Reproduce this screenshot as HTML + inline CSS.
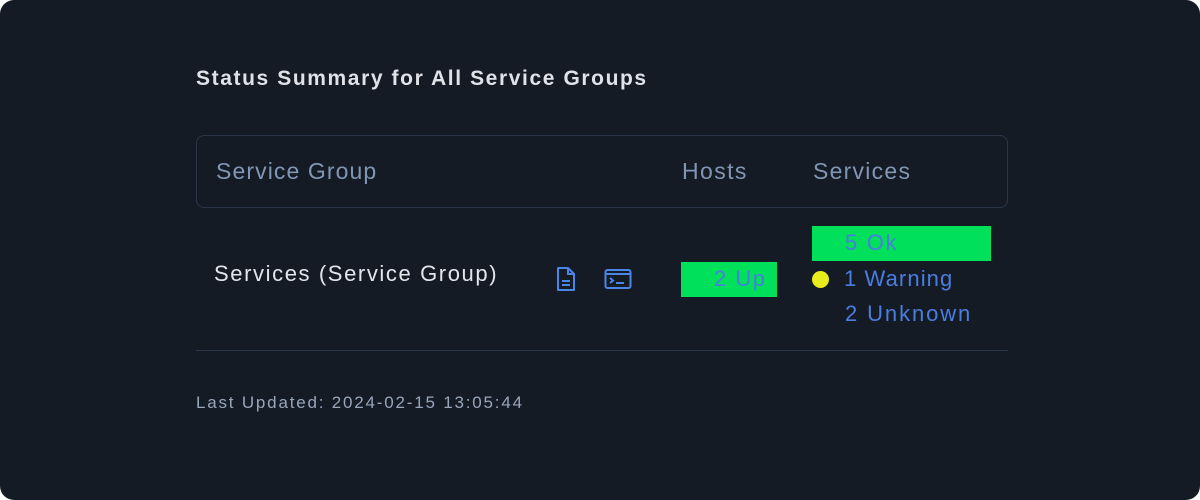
<!DOCTYPE html>
<html><head><meta charset="utf-8"><style>
html,body{margin:0;padding:0;background:#fff;}
body{width:1200px;height:500px;overflow:hidden;}
.card{position:absolute;left:0;top:0;width:1200px;height:500px;background:#151b25;border-radius:14px;font-family:"Liberation Sans",sans-serif;}
.t{position:absolute;white-space:nowrap;}
</style></head><body><div class="card">
<div class="t" style="left:196px;top:67px;font-size:21px;font-weight:bold;color:#dfe3e9;letter-spacing:1.6px;">Status Summary for All Service Groups</div>
<div style="position:absolute;left:196px;top:135px;width:810px;height:71px;border:1px solid #2a3647;border-radius:8px;"></div>
<div class="t" style="left:216px;top:158px;font-size:23px;color:#8196b3;letter-spacing:1.1px;">Service Group</div>
<div class="t" style="left:682px;top:158px;font-size:23px;color:#8196b3;letter-spacing:1.4px;">Hosts</div>
<div class="t" style="left:813px;top:158px;font-size:23px;color:#8196b3;letter-spacing:1.25px;">Services</div>
<div class="t" style="left:214px;top:261px;font-size:22px;color:#e2e6ec;letter-spacing:1.6px;">Services (Service Group)</div>
<svg style="position:absolute;left:555px;top:266px" width="22" height="26" viewBox="0 0 22 26"><path d="M3 2h10l6 6v16H3z" fill="none" stroke="#4a86e8" stroke-width="2" stroke-linejoin="round"/><path d="M13 2v6h6M7 15h8M7 19h8" fill="none" stroke="#4a86e8" stroke-width="2"/></svg>
<svg style="position:absolute;left:604px;top:268px" width="28" height="22" viewBox="0 0 28 22"><rect x="1.5" y="2" width="25" height="18" rx="2" fill="none" stroke="#4a86e8" stroke-width="2"/><path d="M2 6h24" stroke="#4a86e8" stroke-width="2"/><path d="M6 10l3 2.5-3 2.5M12 15h8" fill="none" stroke="#4a86e8" stroke-width="2"/></svg>
<div style="position:absolute;left:681px;top:262px;width:96px;height:35px;background:#00e05a;"></div>
<div class="t" style="left:714px;top:266px;font-size:22px;color:#4a7ddf;letter-spacing:1.5px;">2 Up</div>
<div style="position:absolute;left:812px;top:226px;width:179px;height:35px;background:#00e05a;"></div>
<div class="t" style="left:845px;top:230px;font-size:22px;color:#4a7ddf;letter-spacing:1.7px;">5 Ok</div>
<div style="position:absolute;left:812px;top:271px;width:17px;height:17px;border-radius:50%;background:#e8ec1c;"></div>
<div class="t" style="left:844px;top:266px;font-size:22px;color:#4a7ddf;letter-spacing:1.1px;">1 Warning</div>
<div class="t" style="left:845px;top:301px;font-size:22px;color:#4a7ddf;letter-spacing:1.9px;">2 Unknown</div>
<div style="position:absolute;left:196px;top:350px;width:812px;height:1px;background:#2a3647;"></div>
<div class="t" style="left:196px;top:393px;font-size:17px;color:#98a6ba;letter-spacing:1.8px;">Last Updated: 2024-02-15 13:05:44</div>
</div></body></html>
